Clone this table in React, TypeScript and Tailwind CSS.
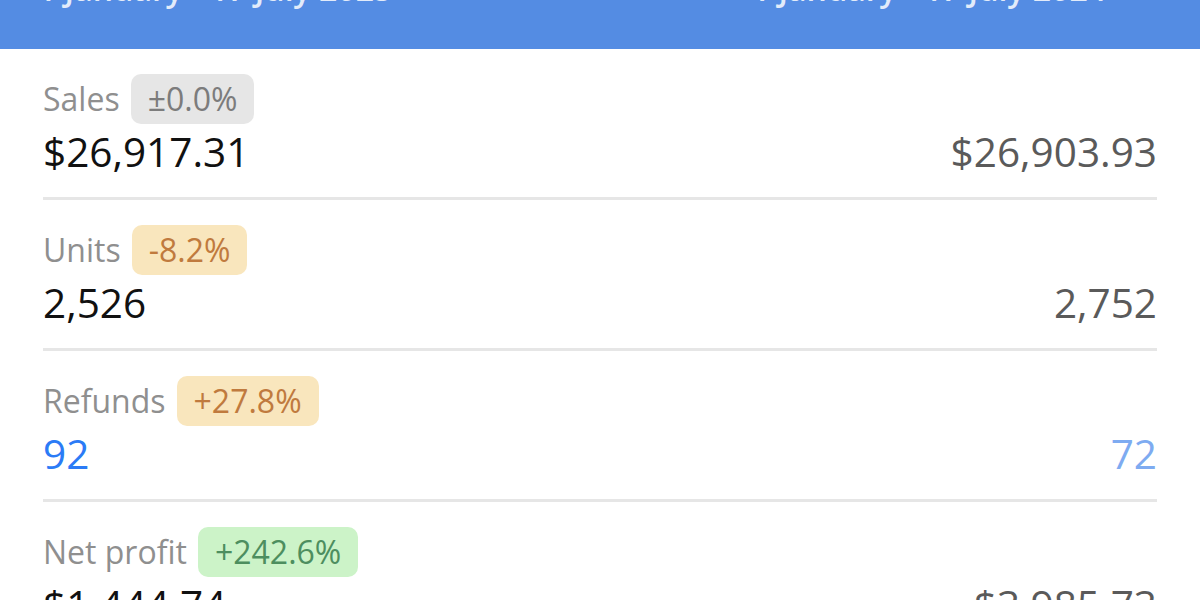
import React from "react";

type Metric = {
  label: string;
  change: string;
  tone: "neutral" | "warn" | "good";
  current: string;
  previous: string;
  blue?: boolean;
};

const metrics: Metric[] = [
  {
    label: "Sales",
    change: "±0.0%",
    tone: "neutral",
    current: "$26,917.31",
    previous: "$26,903.93",
  },
  {
    label: "Units",
    change: "-8.2%",
    tone: "warn",
    current: "2,526",
    previous: "2,752",
  },
  {
    label: "Refunds",
    change: "+27.8%",
    tone: "warn",
    current: "92",
    previous: "72",
    blue: true,
  },
  {
    label: "Net profit",
    change: "+242.6%",
    tone: "good",
    current: "$1,444.74",
    previous: "$3,985.73",
  },
];

const badgeTone = {
  neutral: "bg-[#e6e6e6] text-[#7c7c7c]",
  warn: "bg-[#f9e6bd] text-[#c07a3e]",
  good: "bg-[#ccf3c8] text-[#4d8e5f]",
};

const Row = ({ metric, last }: { metric: Metric; last: boolean }) => {
  return (
    <div
      className={
        last ? "pt-[25px] pb-[21px]" : "pt-[25px] pb-[21px] border-b-[3px] border-[#e6e6e6]"
      }
    >
      <div className="flex items-center gap-[11px]">
        <span className="text-[32px] leading-[40px] text-[#8f8f8f]">{metric.label}</span>
        <span
          className={`h-[50px] flex items-center px-[17px] rounded-[10px] text-[32px] leading-[40px] ${badgeTone[metric.tone]}`}
        >
          {metric.change}
        </span>
      </div>
      <div className="mt-[4px] flex items-center justify-between text-[40.5px] leading-[48px]">
        <span className={metric.blue ? "text-[#2b7bf6]" : "text-[#111111]"}>{metric.current}</span>
        <span className={metric.blue ? "text-[#7eabf1]" : "text-[#5a5a5a]"}>{metric.previous}</span>
      </div>
    </div>
  );
};

export default function App() {
  return (
    <div
      className="w-[1200px] h-[600px] overflow-hidden bg-white"
      style={{ fontFamily: '"Open Sans", "Noto Sans", sans-serif' }}
    >
      {/* period header, mostly scrolled off the top */}
      <div className="h-[49px] bg-[#548ce3] overflow-hidden">
        <div className="-mt-[27px] flex justify-between pl-[38px] pr-[94px] text-[32px] leading-[32px] font-semibold text-[#e2ebfa]">
          <span>1 January - 17 July 2025</span>
          <span>1 January - 17 July 2024</span>
        </div>
      </div>
      <div className="px-[43px]">
        {metrics.map((m, i) => (
          <Row key={m.label} metric={m} last={i === metrics.length - 1} />
        ))}
      </div>
    </div>
  );
}
